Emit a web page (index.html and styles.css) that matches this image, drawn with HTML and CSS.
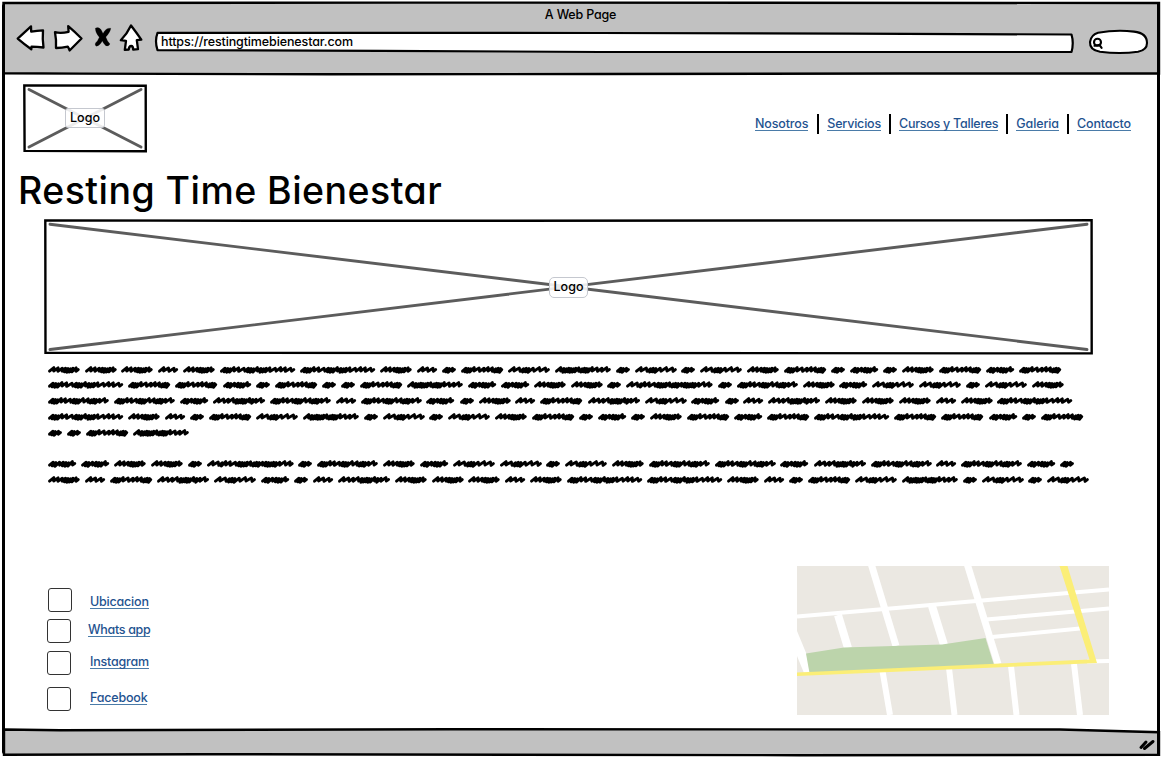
FILE: index.html
```html
<!DOCTYPE html>
<html lang="es">
<head>
<meta charset="utf-8">
<title>A Web Page</title>
<link rel="stylesheet" href="styles.css">
</head>
<body>
<div class="window">
  <header class="chrome">
    <svg class="backdrop" viewBox="0 0 1161 75"><path d="M3.5 3 L400 2.6 L1159 3 L1159 73.5 L900 73.5 L600 74 L330 74.3 L80 73.6 L3.5 73.3Z" fill="#c1c1c1" stroke="#000" stroke-width="2.4"/></svg>
    <div class="title">A Web Page</div>
    <div class="toolbar">
      <svg class="icon back" viewBox="15 22 32 32"><path d="M17.7 38.6 L31 26.4 L31.2 31.7 Q37 30.6 43 30.3 Q42.3 39 43.5 47.5 Q37 46.6 31.5 46.6 L31.3 49.3 Q24 44 17.7 38.6Z"/></svg>
      <svg class="icon forward" viewBox="52 22 32 32"><path d="M55 32.2 Q61 33.6 68.6 31.8 L68.2 26.2 Q75 32 81.5 38.5 L69.6 50.5 Q69 48.5 67.8 46.6 Q62 48 56 48 Q56.5 40 55 32.2Z"/></svg>
      <svg class="icon stop" viewBox="92 22 22 32"><path d="M95.3 28.2 Q98.5 26.5 101 29.5 L103 33.5 Q106 27.5 110.8 28.2 Q110.5 32 105.800 37 Q107.500 42 110 44 Q108.500 47.200 105.500 45.500 Q103.500 43.500 102.300 41 Q100 45.500 96.500 46.300 Q94.500 45.500 95.500 43 Q97.800 41 99.300 37.200 Q95.500 33 95.300 28.200Z"/></svg>
      <svg class="icon home" viewBox="118 22 26 32"><path d="M131 25.5 Q127 34 120.8 40.2 L126 40.8 L124.8 49.8 L128.8 49.5 Q129 46 131.2 46 Q133.2 46 133.2 49.7 L138 49.2 L136.8 40.2 L141.3 39.6 Q136 32 131 25.5Z"/></svg>
      <div class="url">
        <svg class="backdrop" viewBox="154 30 922 24"><path d="M157.5 32.8 L600 33 L850 33.6 L1071.5 34.5 Q1074 43 1071.5 52 L600 52 L380 50.8 L157.5 50.2 Q154.5 41 157.5 32.8Z" fill="#fff" stroke="#000" stroke-width="2.2" stroke-linejoin="round"/></svg>
        <span>https://restingtimebienestar.com</span>
      </div>
      <svg class="search" viewBox="1087 28 62 28"><path d="M1098 32.8 Q1116 29.5 1134 31.6 Q1147 33 1147 43 Q1147 50 1138 51.8 Q1120 54.3 1100 51.8 Q1089.5 50 1090 42 Q1091 35 1098 32.8Z" fill="#fff" stroke="#000" stroke-width="2.1"/><circle cx="1097.5" cy="42.3" r="3.5" fill="none" stroke="#000" stroke-width="2.1"/><path d="M1094.500 45.800 L1099.500 45 L1101.600 47.800" fill="none" stroke="#000" stroke-width="2.1" stroke-linecap="round"/></svg>
    </div>
  </header>

  <main>
    <div class="top">
      <div class="image logo">
        <svg class="backdrop" viewBox="0 0 124 69"><path d="M1.3 1.4 L122.7 1.8 L122.8 67.3 L1.6 66.9Z" class="edge"/><path d="M6 5.5 L118 63 M118 5.5 L6 63" class="cross"/></svg>
        <span>Logo</span>
      </div>
      <nav>
        <a class="n1" href="#">Nosotros</a><i></i><a class="n2" href="#">Servicios</a><i></i><a class="n3" href="#">Cursos y Talleres</a><i></i><a class="n4" href="#">Galeria</a><i></i><a class="n5" href="#">Contacto</a>
      </nav>
    </div>
    <h1>Resting Time Bienestar</h1>
    <div class="image banner">
      <svg class="backdrop" viewBox="0 0 1049 136"><path d="M1.3 1.4 L300 1.8 L1047.6 1.3 L1047.7 134.4 L500 134 L1.5 133.8Z" class="edge"/><path d="M6 5.2 L1043 130.5 M1043 5.2 L6 130.5" class="cross"/></svg>
      <span>Logo</span>
    </div>
    <div class="copy" id="copy"></div>
    <div class="bottom">
      <ul class="contact">
        <li class="c1"><b></b><a href="#">Ubicacion</a></li>
        <li class="c2"><b></b><a href="#">Whats app</a></li>
        <li class="c3"><b></b><a href="#">Instagram</a></li>
        <li class="c4"><b></b><a href="#">Facebook</a></li>
      </ul>
      <svg class="map" viewBox="0 0 312 149">
        <rect width="312" height="149" fill="#ebe8e2"/>
        <g fill="none" stroke="#fff" stroke-width="4">
          <path d="M0 50.5 L105 41.5 L185 34.5 L312 23.5"/>
          <path d="M189 53.5 L312 42.5 M195 71 L288 62 M290 95.5 L312 95"/>
          <path d="M74.5 -1 L99 80 M170.5 -1 L201 98" stroke-width="7"/>
          <path d="M41 49 L51 82 M135 40 L147 79" stroke-width="8"/>
          <path d="M85.5 105 L93 149 M152 102 L157.5 149 M214 100 L219.5 149 M277 98 L283 149" stroke-width="6"/>
        </g>
        <path d="M0 65 L9.5 88 L13 107 L7 107 L0 90Z" fill="#fff"/>
        <path d="M9 87.5 L47 81.5 L145 78.5 L188.5 72 L197 99 L12.5 107Z" fill="#bcd4ab"/>
        <path d="M262.5 0 L270.5 0 L300 97 L0 110 L0 106.5 L292.5 93.5Z" fill="#fbee77"/>
      </svg>
    </div>
  </main>

  <footer>
    <svg class="backdrop" viewBox="0 0 1161 30"><path d="M4 0.5 L60 1.3 L450 0.2 L1060 0.5 L1159 3.2 L1159 25.8 L800 26.2 L200 25.2 L4 25.7Z" fill="#c1c1c1" stroke="#000" stroke-width="2.4"/><path d="M1141 18.5 L1146 13 M1144.5 19.5 L1153 12.5" stroke="#000" stroke-width="3" stroke-linecap="round"/></svg>
  </footer>
</div>
<script src="script.js"></script>
</body>
</html>
```
FILE: styles.css
```css
* { box-sizing: border-box; }
body { margin: 0; background: #fff; color: #000; font-family: Inter, "Open Sans", sans-serif; font-feature-settings: "cv11"; font-size: 12.5px; font-weight: 450; }
svg { display: block; }
.window { position: relative; width: 1161px; height: 759px; display: flex; flex-direction: column; }
.window::after { content: ""; position: absolute; top: 4px; bottom: 5px; left: 2px; right: 1px; border: solid #000; border-width: 0 3px 0 3px; border-radius: 2px; pointer-events: none; }
.backdrop { position: absolute; inset: 0; width: 100%; height: 100%; z-index: -1; overflow: visible; }
.chrome { position: relative; z-index: 0; height: 75px; }
.title { padding-top: 6px; height: 22px; line-height: 18px; text-align: center; letter-spacing: -0.2px; }
.toolbar { display: flex; padding-left: 15px; }
.icon { height: 32px; fill: #fff; stroke: #000; stroke-width: 2.3; stroke-linejoin: round; }
.back { width: 32px; margin-right: 5px; }
.forward { width: 32px; margin-right: 8px; }
.stop { width: 22px; margin-right: 4px; fill: #000; stroke-width: 0.2; }
.home { width: 26px; margin-right: 10px; }
.url { position: relative; z-index: 0; width: 922px; height: 24px; margin-top: 8px; padding-left: 7px; line-height: 24px; letter-spacing: -0.12px; }
.search { width: 62px; height: 28px; margin: 6px 0 0 11px; }

main { flex: 1; display: flex; flex-direction: column; }
.top { display: flex; justify-content: space-between; padding: 9px 30px 0 23px; }
.image { position: relative; z-index: 0; display: flex; align-items: center; justify-content: center; }
.image span { padding: 0 4px; line-height: 18px; height: 20px; border: 1px solid #c5c8cf; border-radius: 3px; background: rgba(255,255,255,.88); }
.logo { width: 124px; height: 69px; }
.logo span { margin-top: -1px; }
.banner span { border-radius: 5px; height: 21px; line-height: 18px; }
.edge { fill: #fff; stroke: #000; stroke-width: 2.4; }
.cross { fill: none; stroke: #5c5c5c; stroke-width: 2.9; stroke-linecap: round; }
nav { display: flex; align-items: center; height: 20px; margin-top: 30px; }
nav i { width: 2px; height: 20px; margin: 0 8px; background: #000; }
a { color: #1f5390; text-decoration: none; border-bottom: 1px solid #4a7ba8; line-height: 13px; white-space: nowrap; letter-spacing: -0.12px; }
.n1 { margin-right: 1px; }
.n2 { letter-spacing: -0.2px; }
.n3 { letter-spacing: -0.25px; }
h1 { margin: 14px 0 0 18px; height: 52px; line-height: 48px; font-size: 37.5px; font-weight: 500; letter-spacing: 0.45px; white-space: nowrap; }
.banner { width: 1049px; height: 136px; margin-left: 44px; }
.copy { margin: 6.5px 0 0 48px; height: 126.5px; }
.line { display: flex; gap: 5px; height: 15.8px; }
.line svg { flex: none; height: 15px; overflow: visible; fill: none; stroke: #000; stroke-width: 2.9; stroke-linecap: round; stroke-linejoin: round; }
.bottom { display: flex; justify-content: space-between; margin-top: 78px; padding: 0 52px 0 47px; }
.contact { list-style: none; margin: 22px 0 0; padding: 0; }
.contact li { display: flex; align-items: center; height: 24px; }
.contact b { width: 24px; height: 24px; border: 1.5px solid #333; border-radius: 3px; }
.contact a { margin: -3px 0 0 19px; letter-spacing: -0.2px; }
.c1 { padding-left: 1px; margin-bottom: 7px; }
.contact .c1 a { margin: 4px 0 0 18px; }
.c2 { margin-bottom: 8px; }
.contact .c2 a { margin-left: 17px; letter-spacing: -0.3px; }
.c3 { margin-bottom: 12px; }
.map { width: 312px; height: 149px; }
footer { position: relative; z-index: 0; height: 30px; }
```
FILE: script.js
```js
// Placeholder copy: every letter is one scribbled word, blank is an empty line.
const lines = [
  "AAADAGGADCEFJCFCFAECBCAEBE",
  "GEEBCECCEJBBAACKCHABFFCFA",
  "HHBIHDHBCADEIFBCDIAAADAG",
  "GADCEFJCFCFAECBCAEBEGEEBCE",
  "CCEJ",
  "",
  "BBAACKCHABFFCFAHHBIHDHBC",
  "ADEIFBCDIAAADAGGADCEFJCFCF"
];
// width and rhythm of each word: d = dense stroke, l = loose stroke, r = long stroke
const words = {
  A: [31.7, "lllddddl"], B: [28.2, "ddldddl"], C: [13.9, "ddl"], D: [20.1, "lrr"],
  E: [42.2, "dddlrlllddd"], F: [41.8, "lrdddrrr"], G: [75.2, "dddllrdddldddlrllr"],
  H: [60.8, "dddllrdddrldddlr"], I: [52, "lrlrdddddldlr"], J: [55.8, "lddddddlddddlrlr"],
  K: [86.6, "lrdllrddddldddldddddlrl"]
};
const step = { d: 2.3, l: 4, r: 5.4 };

function scribble(key) {
  const [width, rhythm] = words[key];
  const total = [...rhythm].reduce((sum, c) => sum + step[c], 0);
  const scale = (width - 5.2) / total;
  let x = 1.5;
  let d = "M1.5 9.2";
  [...rhythm].forEach((c, i) => {
    const w = step[c] * scale;
    const top = (c === "d" ? 6.2 : 5.6) + (i * 7 % 3) * 0.3;
    const low = (c === "d" ? 9.9 : 9) + (i * 5 % 3) * 0.2;
    d += `L${(x + w * 0.5 + 2.3).toFixed(1)} ${top.toFixed(1)}L${(x + w).toFixed(1)} ${low.toFixed(1)}`;
    x += w;
  });
  d += `L${(width - 1.4).toFixed(1)} 7.6`;
  return `<svg width="${width}" viewBox="0 0 ${width} 15"><path d="${d}"/></svg>`;
}

document.getElementById("copy").innerHTML = lines
  .map(line => `<div class="line">${[...line].map(scribble).join("")}</div>`)
  .join("");
```
